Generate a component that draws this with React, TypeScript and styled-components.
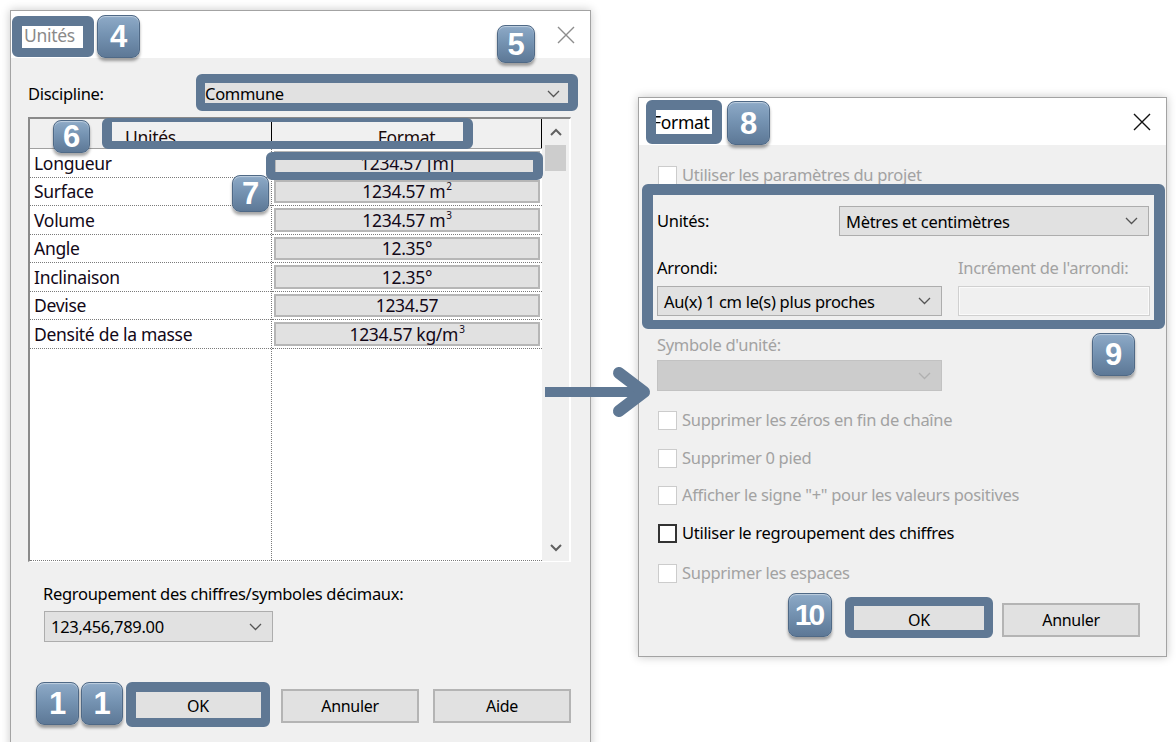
import React from "react";
import styled, { createGlobalStyle } from "styled-components";

const GlobalStyle = createGlobalStyle`
  html, body { margin: 0; padding: 0; background: #ffffff; }
  body { font-family: "Noto Sans", "Open Sans", sans-serif; color: #000; }
  * { box-sizing: border-box; }
`;

const ACCENT = "#5f7894";

const Canvas = styled.div`
  position: relative;
  width: 1176px;
  height: 742px;
  overflow: hidden;
  background: #ffffff;
`;

const Window = styled.div<{ $x: number; $y: number; $w: number; $h: number }>`
  position: absolute;
  left: ${(p) => p.$x}px;
  top: ${(p) => p.$y}px;
  width: ${(p) => p.$w}px;
  height: ${(p) => p.$h}px;
  background: #f0f0f0;
  border: 1px solid #a3a3a3;
  box-shadow: 0 0 9px rgba(0, 0, 0, 0.22);
  display: flex;
  flex-direction: column;
`;

const TitleBar = styled.div`
  height: 47px;
  flex: none;
  background: #ffffff;
  display: flex;
  align-items: center;
  justify-content: space-between;
  padding: 0 15px 0 13px;
`;

const TitleText = styled.span<{ $inactive?: boolean }>`
  font-size: 17.5px;
  color: ${(p) => (p.$inactive ? "#8a8a8a" : "#000")};
  letter-spacing: -0.3px;
`;

const CloseGlyph = styled.svg`
  display: block;
`;

const Body = styled.div<{ $pad: string }>`
  flex: 1;
  display: flex;
  flex-direction: column;
  padding: ${(p) => p.$pad};
`;

const FieldRow = styled.div<{ $mt: number }>`
  display: flex;
  align-items: center;
  margin-top: ${(p) => p.$mt}px;
`;

const Label = styled.span<{ $w?: number; $size?: number; $disabled?: boolean; $mt?: number }>`
  display: block;
  flex: none;
  width: ${(p) => (p.$w ? `${p.$w}px` : "auto")};
  font-size: ${(p) => p.$size ?? 16.5}px;
  line-height: 20px;
  color: ${(p) => (p.$disabled ? "#a2a2a2" : "#000")};
  margin-top: ${(p) => p.$mt ?? 0}px;
  letter-spacing: -0.3px;
  white-space: nowrap;
`;

const Select = styled.div<{ $w?: number; $h: number; $disabled?: boolean; $size?: number }>`
  display: flex;
  align-items: center;
  justify-content: space-between;
  flex: ${(p) => (p.$w ? "none" : "1")};
  width: ${(p) => (p.$w ? `${p.$w}px` : "auto")};
  height: ${(p) => p.$h}px;
  padding: 0 10px 0 6px;
  background: ${(p) => (p.$disabled ? "#cccccc" : "#e1e1e1")};
  border: 1px solid ${(p) => (p.$disabled ? "#c2c2c2" : "#adadad")};
  font-size: ${(p) => p.$size ?? 16.5}px;
  letter-spacing: -0.3px;
  white-space: nowrap;
`;

const TextInput = styled.div<{ $w: number; $h: number }>`
  width: ${(p) => p.$w}px;
  height: ${(p) => p.$h}px;
  background: #f0f0f0;
  border: 1px solid #d0d0d0;
  box-shadow: inset 0 0 0 1px #fafafa;
`;

const Chevron = ({ color = "#555" }: { color?: string }) => (
  <svg width="13" height="8" viewBox="0 0 13 8">
    <path d="M1 1 L6.5 6.5 L12 1" fill="none" stroke={color} strokeWidth="1.3" />
  </svg>
);

/* ---------- Table ---------- */

const Table = styled.div`
  margin-top: 9px;
  height: 445px;
  display: flex;
  background: #ffffff;
  border-style: solid;
  border-width: 2px 1px 1px 2px;
  border-color: #8a8a8a #ffffff #ffffff #8a8a8a;
`;

const Columns = styled.div`
  flex: 1;
  display: flex;
  flex-direction: column;
`;

const HeaderRow = styled.div`
  height: 30px;
  flex: none;
  display: flex;
  background: #f0f0f0;
  border-bottom: 1px solid #a0a0a0;
`;

const HeaderCell = styled.div<{ $w?: number }>`
  flex: ${(p) => (p.$w ? "none" : "1")};
  width: ${(p) => (p.$w ? `${p.$w}px` : "auto")};
  display: flex;
  align-items: center;
  justify-content: center;
  padding-top: 7px;
  border-right: 1px solid #000;
  font-size: 17.5px;
  letter-spacing: -0.3px;
  color: #1a0a0a;
`;

const RowsArea = styled.div`
  flex: 1;
  display: flex;
  border-bottom: 1px dotted #7a7a7a;
`;

const NameColumn = styled.div`
  width: 242px;
  flex: none;
  border-right: 1px dotted #7a7a7a;
`;

const FormatColumn = styled.div`
  flex: 1;
`;

const NameCell = styled.div`
  height: 28.5px;
  display: flex;
  align-items: center;
  padding-left: 4px;
  font-size: 17.5px;
  letter-spacing: -0.3px;
  border-bottom: 1px dotted #7a7a7a;
  color: #120818;
`;

const FormatCell = styled.div`
  height: 28.5px;
  padding: 2px;
  border-bottom: 1px dotted #7a7a7a;
`;

const FormatValue = styled.div`
  height: 100%;
  display: flex;
  align-items: center;
  justify-content: center;
  background: #e1e1e1;
  border: 2px solid #b6b6b6;
  font-size: 17.5px;
  letter-spacing: -0.3px;
  color: #120818;
`;

const ValueText = styled.span`
  display: inline-block;
  white-space: nowrap;
`;

const Sup = styled.sup`
  font-size: 10px;
  vertical-align: 8px;
  line-height: 0;
  margin-left: 1px;
`;

const Scrollbar = styled.div`
  width: 28px;
  flex: none;
  background: #f0f0f0;
  display: flex;
  flex-direction: column;
  align-items: center;
  border-right: 1px solid #fff;
`;

const ScrollArrow = styled.div`
  height: 26px;
  flex: none;
  display: flex;
  align-items: center;
  justify-content: center;
`;

const ScrollThumb = styled.div`
  width: 21px;
  height: 26px;
  flex: none;
  background: #cdcdcd;
`;

const ScrollTrack = styled.div`
  flex: 1;
`;

/* ---------- Buttons ---------- */

const ButtonRow = styled.div<{ $mt: number; $mr?: number }>`
  display: flex;
  justify-content: flex-end;
  gap: 14px;
  margin-top: ${(p) => p.$mt}px;
  margin-right: ${(p) => p.$mr ?? 0}px;
`;

const WinButton = styled.div`
  width: 138px;
  height: 34px;
  display: flex;
  align-items: center;
  justify-content: center;
  background: #e1e1e1;
  border: 2px solid #b4b4b4;
  font-size: 16px;
  letter-spacing: -0.3px;
`;

/* ---------- Right dialog ---------- */

const CheckRow = styled.div<{ $mt: number }>`
  display: flex;
  align-items: center;
  gap: 5px;
  height: 20px;
  margin-top: ${(p) => p.$mt}px;
  margin-left: 1px;
`;

const CheckBox = styled.span<{ $enabled?: boolean }>`
  width: 19px;
  height: 19px;
  flex: none;
  background: #ffffff;
  border: ${(p) => (p.$enabled ? "2px solid #333333" : "1px solid #cccccc")};
`;

const FormGrid = styled.div`
  display: grid;
  grid-template-columns: 285px 192px;
  column-gap: 16px;
  row-gap: 8px;
  margin-top: 22px;
`;

/* ---------- Annotations ---------- */

const Highlight = styled.div<{ $x: number; $y: number; $w: number; $h: number; $b: string }>`
  position: absolute;
  left: ${(p) => p.$x}px;
  top: ${(p) => p.$y}px;
  width: ${(p) => p.$w}px;
  height: ${(p) => p.$h}px;
  border-style: solid;
  border-color: ${ACCENT};
  border-width: ${(p) => p.$b};
  border-radius: 6px;
  pointer-events: none;
`;

const Badge = styled.div<{ $x: number; $y: number; $w: number; $h: number; $tight?: boolean }>`
  position: absolute;
  left: ${(p) => p.$x}px;
  top: ${(p) => p.$y}px;
  width: ${(p) => p.$w}px;
  height: ${(p) => p.$h}px;
  border-radius: 8px;
  background: linear-gradient(180deg, #8eaac7 0%, #7593b2 45%, #5d7896 100%);
  border: 1px solid #4f6986;
  box-shadow: 0 3px 3px rgba(0, 0, 0, 0.35), inset 0 1px 1px rgba(255, 255, 255, 0.45);
  color: #ffffff;
  font-family: "Liberation Sans", Arial, sans-serif;
  font-weight: bold;
  font-size: ${(p) => (p.$tight ? 30 : 31)}px;
  line-height: 1;
  letter-spacing: ${(p) => (p.$tight ? "-3px" : "0")};
  display: flex;
  align-items: center;
  justify-content: center;
  padding-right: ${(p) => (p.$tight ? "3px" : "0")};
`;

const ArrowSvg = styled.svg`
  position: absolute;
  left: 545px;
  top: 364px;
`;

const CloseX = ({ color }: { color: string }) => (
  <CloseGlyph width="18" height="18" viewBox="0 0 18 18">
    <path d="M1 1 L17 17 M17 1 L1 17" stroke={color} strokeWidth="1.4" />
  </CloseGlyph>
);

const rows: [string, React.ReactNode][] = [
  ["Longueur", "1234.57 [m]"],
  ["Surface", <>1234.57 m<Sup>2</Sup></>],
  ["Volume", <>1234.57 m<Sup>3</Sup></>],
  ["Angle", "12.35°"],
  ["Inclinaison", "12.35°"],
  ["Devise", "1234.57"],
  ["Densité de la masse", <>1234.57 kg/m<Sup>3</Sup></>],
];

const checks: { text: string; enabled?: boolean; mt: number }[] = [
  { text: "Supprimer les zéros en fin de chaîne", mt: 19 },
  { text: "Supprimer 0 pied", mt: 18 },
  { text: "Afficher le signe \"+\" pour les valeurs positives", mt: 17 },
  { text: "Utiliser le regroupement des chiffres", enabled: true, mt: 18 },
  { text: "Supprimer les espaces", mt: 20 },
];

export default function App() {
  return (
    <Canvas>
      <GlobalStyle />

      {/* Left dialog: Unités */}
      <Window $x={10} $y={10} $w={581} $h={770}>
        <TitleBar>
          <TitleText $inactive>Unités</TitleText>
          <CloseX color="#8d8d8d" />
        </TitleBar>
        <Body $pad="0 19px 0 17px">
          <FieldRow $mt={21}>
            <Label $w={170}>Discipline:</Label>
            <Select $h={29}>
              <span>Commune</span>
              <Chevron />
            </Select>
          </FieldRow>

          <Table>
            <Columns>
              <HeaderRow>
                <HeaderCell $w={242}>Unités</HeaderCell>
                <HeaderCell>Format</HeaderCell>
              </HeaderRow>
              <RowsArea>
                <NameColumn>
                  {rows.map(([n]) => (
                    <NameCell key={n}>{n}</NameCell>
                  ))}
                </NameColumn>
                <FormatColumn>
                  {rows.map(([n, v]) => (
                    <FormatCell key={n}>
                      <FormatValue>
                        <ValueText>{v}</ValueText>
                      </FormatValue>
                    </FormatCell>
                  ))}
                </FormatColumn>
              </RowsArea>
            </Columns>
            <Scrollbar>
              <ScrollArrow>
                <svg width="12" height="8" viewBox="0 0 12 8">
                  <path d="M1 7 L6 2 L11 7" fill="none" stroke="#606060" strokeWidth="2" />
                </svg>
              </ScrollArrow>
              <ScrollThumb />
              <ScrollTrack />
              <ScrollArrow>
                <svg width="12" height="8" viewBox="0 0 12 8">
                  <path d="M1 1 L6 6 L11 1" fill="none" stroke="#606060" strokeWidth="2" />
                </svg>
              </ScrollArrow>
            </Scrollbar>
          </Table>

          <Label $mt={22} style={{ marginLeft: 15 }}>
            Regroupement des chiffres/symboles décimaux:
          </Label>
          <FieldRow $mt={7}>
            <span style={{ width: 16, flex: "none" }} />
            <Select $w={229} $h={31}>
              <span>123,456,789.00</span>
              <Chevron />
            </Select>
          </FieldRow>

          <ButtonRow $mt={47}>
            <WinButton>OK</WinButton>
            <WinButton>Annuler</WinButton>
            <WinButton>Aide</WinButton>
          </ButtonRow>
        </Body>
      </Window>

      {/* Right dialog: Format */}
      <Window $x={638} $y={97} $w={529} $h={560}>
        <TitleBar>
          <TitleText>Format</TitleText>
          <CloseX color="#111" />
        </TitleBar>
        <Body $pad="0 17px 0 18px">
          <CheckRow $mt={20}>
            <CheckBox />
            <Label $disabled>Utiliser les paramètres du projet</Label>
          </CheckRow>

          <FieldRow $mt={21}>
            <Label $w={182}>Unités:</Label>
            <Select $h={30}>
              <span>Mètres et centimètres</span>
              <Chevron />
            </Select>
          </FieldRow>

          <FormGrid>
            <Label>Arrondi:</Label>
            <Label $disabled>Incrément de l'arrondi:</Label>
            <Select $h={30} $w={285}>
              <span>Au(x) 1 cm le(s) plus proches</span>
              <Chevron />
            </Select>
            <TextInput $w={192} $h={30} />
          </FormGrid>

          <Label $disabled $mt={19}>Symbole d'unité:</Label>
          <FieldRow $mt={5}>
            <Select $h={31} $w={285} $disabled>
              <span />
              <Chevron color="#b0b0b0" />
            </Select>
          </FieldRow>

          {checks.map((c) => (
            <CheckRow key={c.text} $mt={c.mt}>
              <CheckBox $enabled={c.enabled} />
              <Label $disabled={!c.enabled}>{c.text}</Label>
            </CheckRow>
          ))}

          <ButtonRow $mt={20} $mr={9}>
            <WinButton>OK</WinButton>
            <WinButton>Annuler</WinButton>
          </ButtonRow>
        </Body>
      </Window>

      {/* Annotation arrow */}
      <ArrowSvg width="110" height="56" viewBox="0 0 110 56">
        <rect x="0" y="23" width="96" height="10" fill={ACCENT} />
        <path d="M74 9 L99 28 L74 47" fill="none" stroke={ACCENT} strokeWidth="12" strokeLinecap="round" strokeLinejoin="round" />
      </ArrowSvg>

      {/* Highlight frames */}
      <Highlight $x={12} $y={16} $w={82} $h={41} $b="10px 11px 9px 10px" />
      <Highlight $x={196} $y={74} $w={382} $h={37} $b="9px 10px 8px 9px" />
      <Highlight $x={102} $y={118} $w={371} $h={31} $b="4px 10px 8px 10px" />
      <Highlight $x={266} $y={152} $w={277} $h={28} $b="8px 10px 8px 9px" />
      <Highlight $x={126} $y={682} $w={144} $h={45} $b="10px 9px 9px 10px" />
      <Highlight $x={646} $y={100} $w={76} $h={44} $b="10px 10px 10px 10px" />
      <Highlight $x={642} $y={184} $w={523} $h={145} $b="11px 11px 9px 11px" />
      <Highlight $x={845} $y={597} $w={148} $h={41} $b="9px 9px 8px 9px" />

      {/* Numbered badges */}
      <Badge $x={97} $y={15} $w={43} $h={43}>4</Badge>
      <Badge $x={497} $y={25} $w={38} $h={38}>5</Badge>
      <Badge $x={53} $y={120} $w={37} $h={33}>6</Badge>
      <Badge $x={232} $y={175} $w={37} $h={37}>7</Badge>
      <Badge $x={36} $y={682} $w={43} $h={43}>1</Badge>
      <Badge $x={81} $y={682} $w={42} $h={43}>1</Badge>
      <Badge $x={727} $y={101} $w={43} $h={44}>8</Badge>
      <Badge $x={1092} $y={333} $w={43} $h={43}>9</Badge>
      <Badge $x={788} $y={593} $w={44} $h={44} $tight>10</Badge>
    </Canvas>
  );
}
